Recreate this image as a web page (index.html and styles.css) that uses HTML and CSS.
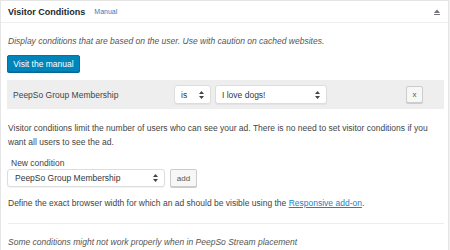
FILE: index.html
```html
<!DOCTYPE html>
<html lang="en">
<head>
  <meta charset="UTF-8">
  <title>Visitor Conditions</title>
  <link rel="stylesheet" href="styles.css">
</head>
<body>
  <div class="postbox">
    <div class="postbox-header">
      <h2>Visitor Conditions</h2>
      <a class="link manual-link">Manual</a>
      <span class="toggle">
        <svg width="6" height="6" viewBox="0 0 6 6"><path d="M0 4 L3 0.5 L6 4 Z" fill="#72777c"/><rect x="0" y="5" width="6" height="1" fill="#72777c"/></svg>
      </span>
    </div>
    <div class="inside">
      <p class="description">Display conditions that are based on the user. Use with caution on cached websites.</p>
      <button class="button-primary">Visit the manual</button>

      <div class="condition-row">
        <span class="condition-name">PeepSo Group Membership</span>
        <div class="fake-select select-op">is
          <svg class="arrows" width="5" height="8" viewBox="0 0 5 8"><path d="M0 3 L2.5 0 L5 3 Z M0 5 L2.5 8 L5 5 Z" fill="#444"/></svg>
        </div>
        <div class="fake-select select-value">I love dogs!
          <svg class="arrows" width="5" height="8" viewBox="0 0 5 8"><path d="M0 3 L2.5 0 L5 3 Z M0 5 L2.5 8 L5 5 Z" fill="#444"/></svg>
        </div>
        <button class="button remove-btn">x</button>
      </div>

      <p class="info first">Visitor conditions limit the number of users who can see your ad. There is no need to set visitor conditions if you want all users to see the ad.</p>

      <div class="new-condition">
        <label>New condition</label>
        <div class="new-row">
          <div class="fake-select select-new">PeepSo Group Membership
            <svg class="arrows" width="5" height="8" viewBox="0 0 5 8"><path d="M0 3 L2.5 0 L5 3 Z M0 5 L2.5 8 L5 5 Z" fill="#444"/></svg>
          </div>
          <button class="button add-btn">add</button>
        </div>
      </div>

      <p class="info">Define the exact browser width for which an ad should be visible using the <a class="link underline">Responsive add-on</a>.</p>

      <hr>

      <p class="description">Some conditions might not work properly when in PeepSo Stream placement</p>
    </div>
  </div>
</body>
</html>
```

FILE: styles.css
```css
body {
  margin: 0;
  background: #f1f1f1;
  font-family: "Liberation Sans", Arial, sans-serif;
  font-size: 8.5px;
  color: #444;
}
.link {
  color: #1a84c4;
  cursor: pointer;
}
.underline {
  text-decoration: underline;
}
.postbox {
  width: 449px;
  height: 260px;
  box-sizing: border-box;
  background: #fff;
  border: 1px solid #e5e5e5;
}
.postbox-header {
  display: flex;
  align-items: center;
  height: 21px;
  padding: 0 7px;
  border-bottom: 1px solid #eee;
}
.postbox-header h2 {
  margin: 0;
  font-size: 9px;
  font-weight: bold;
  color: #23282d;
}
.manual-link {
  margin-left: 9px;
  font-size: 7px;
}
.toggle {
  margin-left: auto;
  margin-right: 1px;
  display: flex;
}
.inside {
  padding: 0 4px 0 6px;
}
.description {
  margin: 12px 0 0 1px;
  font-style: italic;
  color: #555;
  line-height: 13px;
}
.button-primary {
  display: block;
  margin-top: 7px;
  height: 17px;
  width: 73px;
  padding: 0;
  font-family: inherit;
  font-size: 8.5px;
  color: #fff;
  background: #0085ba;
  border: 1px solid #0073aa;
  border-radius: 2px;
  box-shadow: 0 1px 0 #006799;
}
.condition-row {
  display: flex;
  align-items: center;
  height: 29px;
  margin-top: 8px;
  background: #eeeeee;
  padding-left: 6px;
}
.condition-name {
  width: 161px;
}
.fake-select {
  display: flex;
  align-items: center;
  justify-content: space-between;
  box-sizing: border-box;
  height: 19px;
  padding: 0 6px 0 6px;
  background: #fff;
  border: 1px solid #ddd;
  border-radius: 3px;
  box-shadow: 0 1px 1px rgba(0, 0, 0, 0.05);
  color: #32373c;
}
.select-op {
  width: 37px;
  margin-right: 4px;
}
.select-value {
  width: 112px;
}
.button {
  padding: 0;
  font-family: inherit;
  font-size: 8px;
  color: #555;
  background: #f7f7f7;
  border: 1px solid #ccc;
  border-radius: 2px;
  box-shadow: 0 1px 0 #ccc;
}
.remove-btn {
  width: 17px;
  height: 17px;
  margin-left: auto;
  margin-right: 21px;
}
.info {
  margin: 9px 0 0 1px;
  line-height: 14px;
}
.info.first {
  margin-top: 12px;
}
.new-condition {
  margin-top: 9px;
}
.new-condition label {
  display: block;
  margin-left: 4px;
  line-height: 10px;
}
.new-row {
  display: flex;
  gap: 5px;
  margin-top: 1px;
}
.select-new {
  width: 158px;
  height: 18px;
  padding-left: 7px;
}
.add-btn {
  width: 27px;
  height: 18px;
}
hr {
  margin: 13px 0 0 1px;
  border: 0;
  border-top: 1px solid #eee;
}
```
